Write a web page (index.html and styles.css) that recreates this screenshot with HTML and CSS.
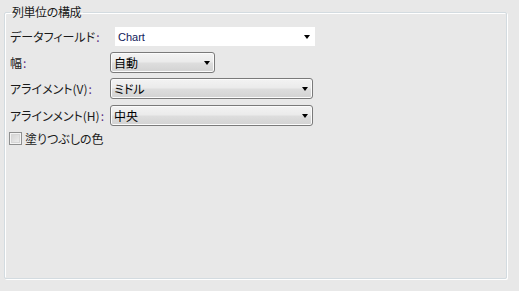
FILE: index.html
```html
<!DOCTYPE html>
<html lang="ja">
<head>
<meta charset="utf-8">
<link rel="stylesheet" href="styles.css">
</head>
<body>
<div class="page">
  <fieldset class="group">
    <legend class="group-title">列単位の構成</legend>
    <div class="form">
      <div class="label">データフィールド<span class="colon">:</span></div>
      <div class="combo-text"><span class="value">Chart</span><span class="arrow"></span></div>

      <div class="label">幅<span class="colon">:</span></div>
      <div class="select narrow"><span class="value">自動</span><span class="arrow"></span></div>

      <div class="label">アライメント(V)<span class="colon">:</span></div>
      <div class="select wide shift"><span class="value">ミドル</span><span class="arrow"></span></div>

      <div class="label">アラインメント(H)<span class="colon">:</span></div>
      <div class="select wide"><span class="value">中央</span><span class="arrow"></span></div>

      <label class="check-row"><span class="checkbox"></span><span class="check-label">塗りつぶしの色</span></label>
    </div>
  </fieldset>
</div>
</body>
</html>
```

FILE: styles.css
```css
html, body {
  margin: 0;
  padding: 0;
  background: #e8e8e8;
}
body {
  font-family: "Liberation Sans", "Noto Sans CJK JP", sans-serif;
  font-size: 12px;
  color: #000;
}
.page {
  width: 519px;
  height: 291px;
  box-sizing: border-box;
  padding: 4px 12px 12px 4px;
}
.group {
  margin: 0;
  padding: 0 0 0 5px;
  height: 275px;
  box-sizing: border-box;
  border: 1px solid #d3dbe0;
  border-radius: 2px;
  box-shadow: 1px 1px 0 #ffffff, inset 1px 1px 0 #ffffff;
  min-width: 0;
}
.group-title {
  margin-left: 0;
  padding: 0 2px;
  font-family: "Noto Sans CJK JP", sans-serif;
  font-size: 12px;
  line-height: 16px;
  letter-spacing: -0.5px;
  color: #1a1a1a;
}
.form {
  display: grid;
  grid-template-columns: 100px auto;
  row-gap: 6px;
  align-items: center;
  justify-items: start;
  margin-top: 7px;
}
.label {
  font-family: "Noto Sans CJK JP", sans-serif;
  font-feature-settings: "palt";
  font-size: 12px;
  line-height: 16px;
  color: #1a1a1a;
}
.colon {
  color: #5a2a80;
  margin-left: 1px;
}
.combo-text {
  margin-left: 5px;
  width: 200px;
  height: 19px;
  background: #ffffff;
  display: flex;
  align-items: center;
  justify-content: space-between;
  padding: 0 5px 0 3px;
  box-sizing: border-box;
}
.combo-text .value {
  font-family: "Liberation Sans", sans-serif;
  font-size: 11px;
  color: #10205a;
}
.select {
  height: 21px;
  box-sizing: border-box;
  border: 1px solid #7a7a7a;
  border-radius: 3px;
  background: linear-gradient(#f3f3f3, #ebebeb 45%, #dddddd 55%, #d2d2d2);
  box-shadow: inset 0 0 0 1px #fbfbfb;
  display: flex;
  align-items: center;
  justify-content: space-between;
  padding: 0 4px 0 3px;
}
.shift {
  margin-top: -1px;
}
.select .value {
  font-family: "Noto Sans CJK JP", sans-serif;
  font-feature-settings: "palt";
  font-size: 12px;
  line-height: 14px;
}
.narrow { width: 105px; }
.wide { width: 203px; }
.arrow {
  width: 0;
  height: 0;
  border-left: 3px solid transparent;
  border-right: 3px solid transparent;
  border-top: 4px solid #000;
  margin-top: 1px;
}
.check-row {
  grid-column: 1 / 3;
  display: flex;
  align-items: center;
  margin-left: -1px;
  height: 13px;
}
.checkbox {
  width: 13px;
  height: 13px;
  box-sizing: border-box;
  border: 1px solid #8e8f8f;
  background: linear-gradient(135deg, #d0d0d0, #f2f2f2);
  box-shadow: inset 0 0 0 1px #f4f4f4, inset 0 0 0 2px #d6d6d6;
}
.check-label {
  margin-left: 3px;
  font-family: "Noto Sans CJK JP", sans-serif;
  font-feature-settings: "palt";
  font-size: 12px;
  line-height: 16px;
  color: #1a1a1a;
}
```
